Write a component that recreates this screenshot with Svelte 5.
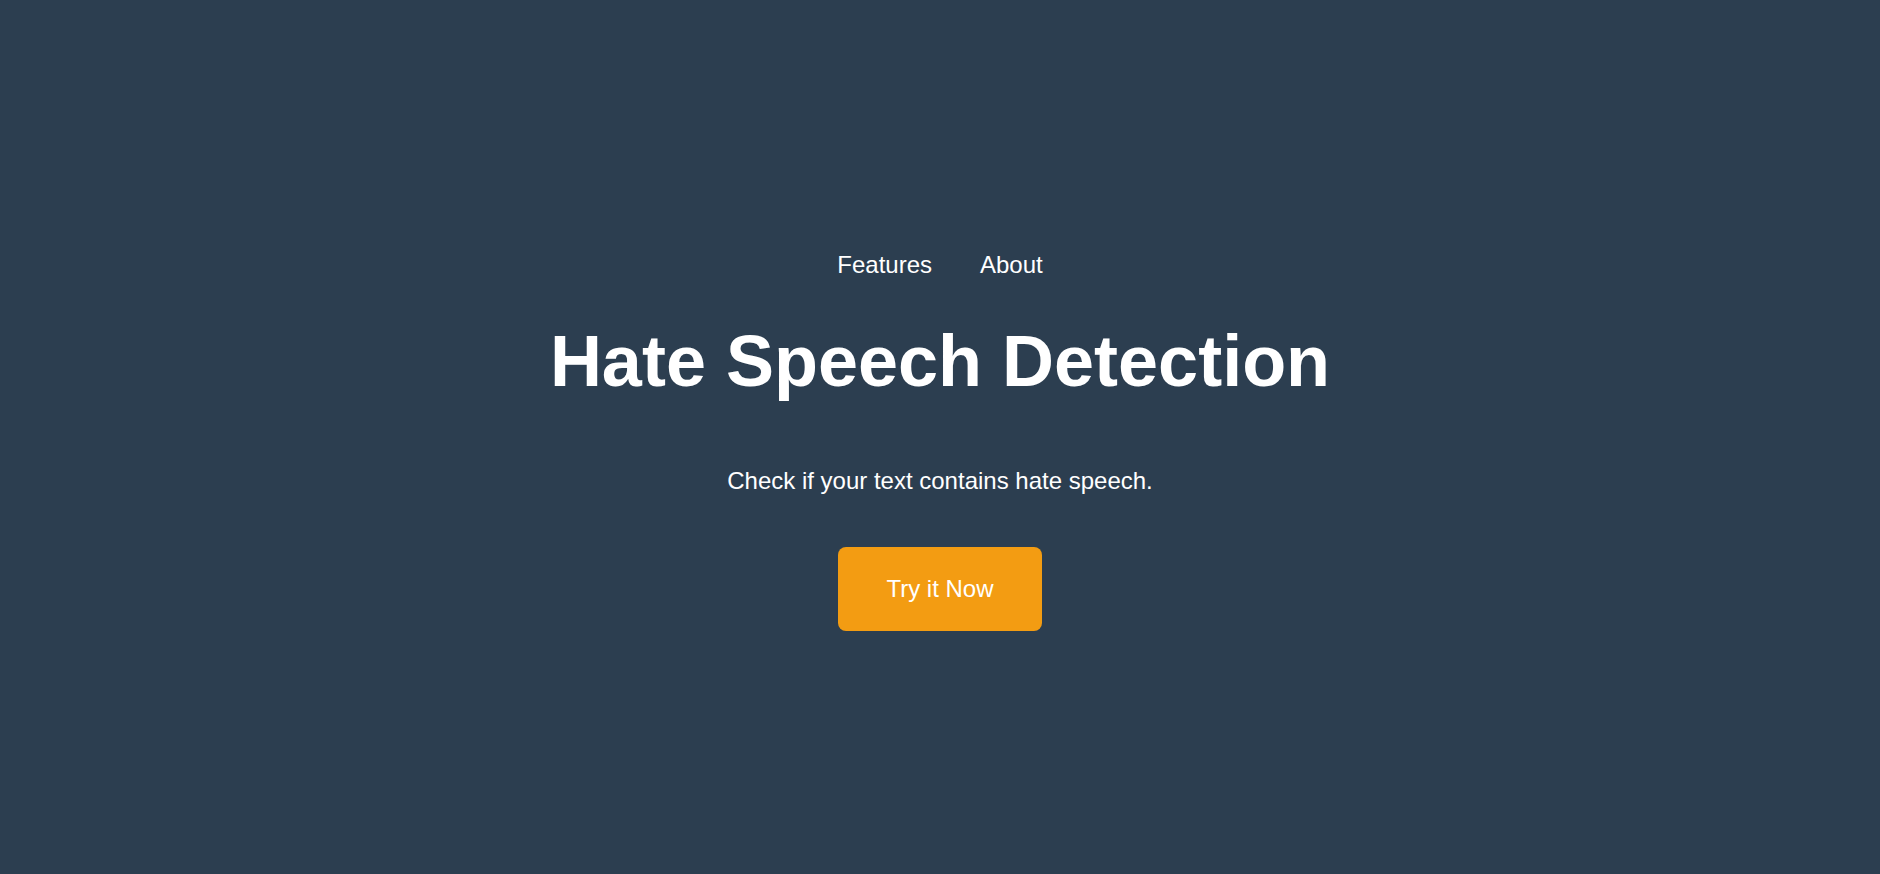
<script>
  const links = [
    { label: 'Features', href: '#features' },
    { label: 'About', href: '#about' }
  ];
</script>

<main class="hero">
  <nav class="nav" aria-label="Main">
    {#each links as link}
      <a class="nav-link" href={link.href}>{link.label}</a>
    {/each}
  </nav>
  <h1 class="title">Hate Speech Detection</h1>
  <p class="lead">Check if your text contains hate speech.</p>
  <button class="cta" type="button">Try it Now</button>
</main>

<style>
  :global(body) {
    margin: 0;
    background: #2c3e50;
  }

  .hero {
    display: flex;
    flex-direction: column;
    align-items: center;
    justify-content: center;
    min-height: 100vh;
    padding-top: 4px;
    box-sizing: border-box;
    font-family: 'Liberation Sans', Arial, sans-serif;
    font-size: 24px;
    line-height: 36px;
    color: #fff;
    text-align: center;
  }

  .nav {
    display: flex;
    gap: 48px;
    margin-bottom: 24px;
  }

  .nav-link {
    color: inherit;
    text-decoration: none;
  }

  .title {
    margin: 0 0 48px;
    font-size: 72px;
    line-height: 108px;
    font-weight: 700;
  }

  .lead {
    margin: 0 0 48px;
  }

  .cta {
    padding: 24px 48px;
    border: 0;
    border-radius: 8px;
    background: #f39c12;
    color: inherit;
    font: inherit;
    cursor: pointer;
  }
</style>
